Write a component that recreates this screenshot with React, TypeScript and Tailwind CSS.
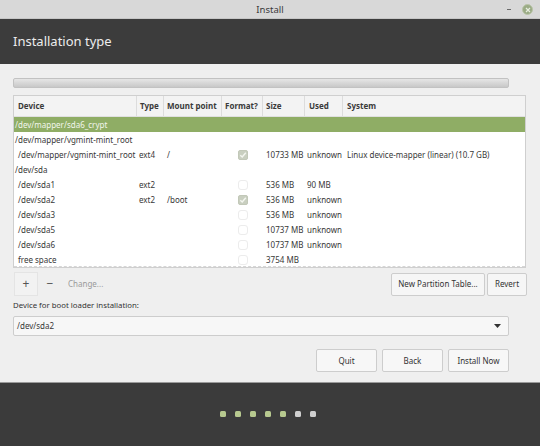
import React from "react";

type Row = {
  device: string;
  indent?: boolean;
  type?: string;
  mount?: string;
  format?: "checked" | "empty" | null;
  size?: string;
  used?: string;
  system?: string;
  selected?: boolean;
};

const rows: Row[] = [
  { device: "/dev/mapper/sda6_crypt", selected: true, format: null },
  { device: "/dev/mapper/vgmint-mint_root", format: null },
  { device: "/dev/mapper/vgmint-mint_root", indent: true, type: "ext4", mount: "/", format: "checked", size: "10733 MB", used: "unknown", system: "Linux device-mapper (linear) (10.7 GB)" },
  { device: "/dev/sda", format: null },
  { device: "/dev/sda1", indent: true, type: "ext2", format: "empty", size: "536 MB", used: "90 MB" },
  { device: "/dev/sda2", indent: true, type: "ext2", mount: "/boot", format: "checked", size: "536 MB", used: "unknown" },
  { device: "/dev/sda3", indent: true, format: "empty", size: "536 MB", used: "unknown" },
  { device: "/dev/sda5", indent: true, format: "empty", size: "10737 MB", used: "unknown" },
  { device: "/dev/sda6", indent: true, format: "empty", size: "10737 MB", used: "unknown" },
  { device: "free space", indent: true, format: "empty", size: "3754 MB" },
];

function Check({ kind }: { kind: "checked" | "empty" }) {
  if (kind === "checked") {
    return (
      <div className="w-[10px] h-[10px] rounded-[2px] bg-[#c9cfc0] border border-[#c2c8b8] flex items-center justify-center">
        <svg width="8" height="8" viewBox="0 0 8 8">
          <path d="M1.3 4.2 L3.2 6 L6.8 1.8" stroke="#f4f6f0" strokeWidth="1.4" fill="none" />
        </svg>
      </div>
    );
  }
  return <div className="w-[10px] h-[10px] rounded-[3px] border border-[#ececec] bg-white" />;
}

export default function App() {
  const font = { fontFamily: '"Noto Sans", "DejaVu Sans", sans-serif' };
  return (
    <div className="w-[540px] h-[446px] flex flex-col bg-[#efefef] text-[8px] text-[#383838] overflow-hidden" style={font}>
      {/* title bar */}
      <div className="h-[19px] bg-[#d8d8d8] border-b border-[#c6c6c6] flex items-center relative">
        <div className="flex-1 text-center text-[9.5px] text-[#3a3a3a] leading-none pt-[1px]">Install</div>
        <div className="absolute right-[29px] top-[9px] w-[4px] h-[1px] bg-[#6a6a6a]" />
        <div className="absolute right-[7px] top-[4px] w-[11px] h-[11px] rounded-full bg-[#9aab85] border border-[#b9c4a8] flex items-center justify-center">
          <svg width="6" height="6" viewBox="0 0 6 6">
            <path d="M1 1 L5 5 M5 1 L1 5" stroke="#e8eee0" strokeWidth="1.2" />
          </svg>
        </div>
      </div>
      {/* dark header */}
      <div className="h-[45px] bg-[#3c3c3c] flex items-center pl-[13px]">
        <span className="text-[13px] text-[#ececec] leading-none">Installation type</span>
      </div>

      {/* body */}
      <div className="flex-1 flex flex-col px-[13px] pt-[14px]">
        {/* partition bar */}
        <div className="w-[496px] h-[10px] rounded-[2px] border border-[#c2c2c2] bg-gradient-to-b from-[#e6e6e6] to-[#c8c8c8]" />

        {/* table */}
        <div className="mt-[7px] w-[513px] h-[173px] bg-white border border-[#cfcfcf] flex flex-col relative">
          <div className="h-[21px] flex bg-[#f3f3f3] border-b border-[#e0e0e0] font-bold text-[#3a3a3a] whitespace-nowrap">
            <div className="w-[123px] pl-[4px] flex items-center border-r border-[#dcdcdc]">Device</div>
            <div className="w-[27px] pl-[3px] flex items-center border-r border-[#dcdcdc]">Type</div>
            <div className="w-[58px] pl-[3px] flex items-center border-r border-[#dcdcdc]">Mount point</div>
            <div className="w-[41px] pl-[3px] flex items-center border-r border-[#dcdcdc]">Format?</div>
            <div className="w-[42px] pl-[3px] flex items-center border-r border-[#dcdcdc]">Size</div>
            <div className="w-[38px] pl-[4px] flex items-center border-r border-[#dcdcdc]">Used</div>
            <div className="flex-1 pl-[4px] flex items-center">System</div>
          </div>
          {rows.map((r, i) => (
            <div
              key={i}
              className={
                r.selected
                  ? "h-[15px] flex items-center bg-[#8fad65] text-[#f2f6ec] whitespace-nowrap"
                  : "h-[15px] flex items-center whitespace-nowrap"
              }
            >
              <div className={r.indent ? "w-[123px] pl-[4px]" : "w-[123px] pl-[1px]"}>{r.device}</div>
              <div className="w-[27px] pl-[2px]">{r.type}</div>
              <div className="w-[58px] pl-[3px]">{r.mount}</div>
              <div className="w-[41px] flex justify-center">{r.format ? <Check kind={r.format} /> : null}</div>
              <div className="w-[42px] pl-[3px]">{r.size}</div>
              <div className="w-[38px] pl-[2px]">{r.used}</div>
              <div className="flex-1 pl-[4px]">{r.system}</div>
            </div>
          ))}
          <div className="absolute left-0 right-0 bottom-0 h-[1px] border-b border-dashed border-[#d6d6d6]" />
        </div>

        {/* toolbar */}
        <div className="mt-[4px] flex items-center h-[24px]">
          <div className="w-[24px] h-[24px] ml-[1px] border border-[#e4e4e4] bg-[#f2f2f2] flex items-center justify-center text-[12px] text-[#555] leading-none">+</div>
          <div className="w-[24px] h-[24px] flex items-center justify-center text-[12px] text-[#555] leading-none">−</div>
          <div className="ml-[6px] text-[#9a9a9a]">Change...</div>
          <div className="flex-1" />
          <div className="h-[23px] w-[94px] border border-[#cdcdcd] rounded-[2px] bg-[#f6f6f6] flex items-center justify-center text-[#333] whitespace-nowrap">New Partition Table...</div>
          <div className="h-[23px] w-[40px] ml-[2px] border border-[#cdcdcd] rounded-[2px] bg-[#f6f6f6] flex items-center justify-center text-[#333]">Revert</div>
        </div>

        <div className="mt-[3px] h-[14px] flex items-center text-[#333] text-[7.8px]">Device for boot loader installation:</div>

        {/* combo */}
        <div className="mt-[3px] w-[496px] h-[20px] border border-[#cdcdcd] rounded-[2px] bg-[#f7f7f7] flex items-center pl-[3px] pr-[7px]">
          <span className="flex-1">/dev/sda2</span>
          <svg width="7" height="4" viewBox="0 0 7 4"><path d="M0 0 H7 L3.5 4 Z" fill="#333" /></svg>
        </div>

        {/* buttons */}
        <div className="mt-[13px] w-[496px] flex justify-end gap-[5px]">
          <div className="w-[61px] h-[23px] border border-[#cdcdcd] rounded-[2px] bg-[#f7f7f7] flex items-center justify-center text-[#333]">Quit</div>
          <div className="w-[61px] h-[23px] border border-[#cdcdcd] rounded-[2px] bg-[#f7f7f7] flex items-center justify-center text-[#333]">Back</div>
          <div className="w-[61px] h-[23px] border border-[#cdcdcd] rounded-[2px] bg-[#f7f7f7] flex items-center justify-center text-[#333]">Install Now</div>
        </div>
      </div>

      {/* footer */}
      <div className="h-[64px] bg-[#3b3b3b] border-t border-[#9a9a9a] flex items-center justify-center gap-[9px] pb-[1px] pr-[4px]">
        {["g", "g", "g", "g", "g", "w", "w"].map((c, i) => (
          <div key={i} className={c === "g" ? "w-[6px] h-[6px] rounded-[1.5px] bg-[#b7c98f]" : "w-[6px] h-[6px] rounded-[1.5px] bg-[#cfcfcf]"} />
        ))}
      </div>
    </div>
  );
}
